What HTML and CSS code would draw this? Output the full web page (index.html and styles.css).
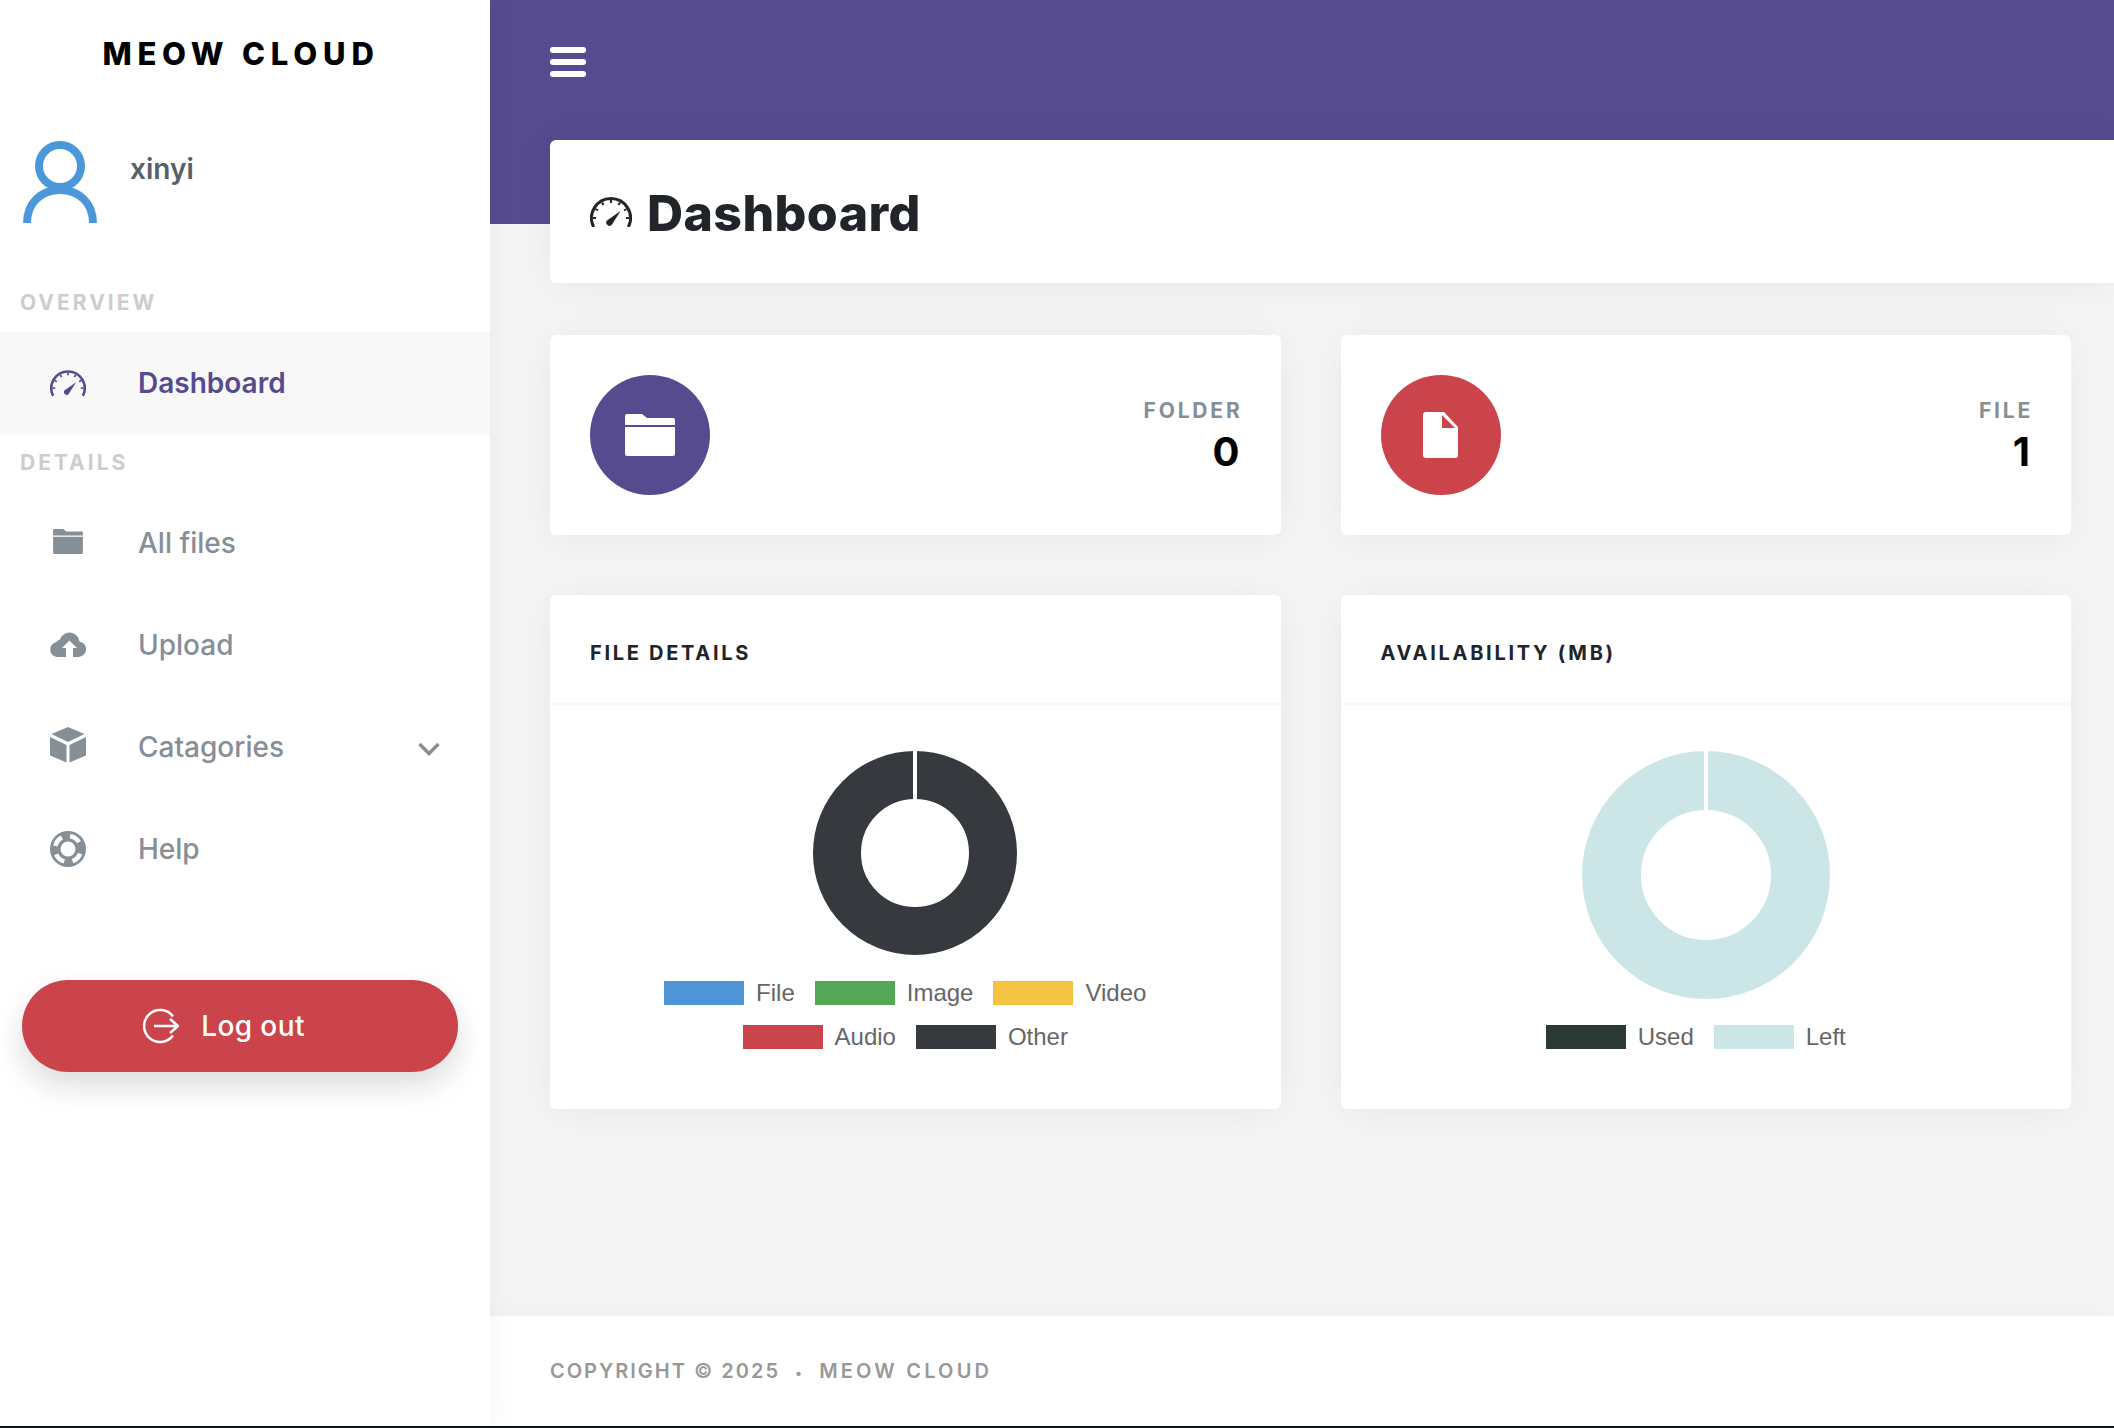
FILE: index.html
```html
<!DOCTYPE html>
<html lang="en">
  <head>
    <meta charset="UTF-8" />
    <title>Meow Cloud - Dashboard</title>
    <link rel="stylesheet" href="styles.css">
  </head>
  <body>
    <svg class="defs" width="0" height="0">
      <symbol id="gauge" viewBox="0 0 42 30">
        <path class="gauge-arc" d="M3.7 30A19.5 19.5 0 1 1 38.3 30" />
        <path class="gauge-ticks" d="M3 21h3M5.4 12l2.6 1.5M12 5.4l1.5 2.6M21 3v3M30 5.4L28.5 8M36.6 12L34 13.5M39 21h-3" />
        <path fill="currentColor" d="M30.5 14L22 27.5a3.2 3.2 0 0 1-5-4z" />
      </symbol>
      <symbol id="folder" viewBox="0 0 50 42">
        <path fill="currentColor" d="M2 0h15l5 4h26a2 2 0 0 1 2 2v5H0V2a2 2 0 0 1 2-2z" />
        <path fill="currentColor" d="M0 13h50v27a2 2 0 0 1-2 2H2a2 2 0 0 1-2-2z" />
      </symbol>
    </svg>

    <aside class="sidebar">
      <div class="brand">MEOW CLOUD</div>
      <div class="user">
        <svg class="user-icon" viewBox="0 0 74 83">
          <circle cx="37" cy="25" r="21" />
          <path d="M4 82C4 62 18 49 37 49s33 13 33 33" />
        </svg>
        <span class="user-name">xinyi</span>
      </div>

      <div class="menu-header first">OVERVIEW</div>
      <a class="menu-item active">
        <span class="menu-icon"><svg width="36" height="26"><use href="#gauge" /></svg></span>
        <span>Dashboard</span>
      </a>

      <div class="menu-header">DETAILS</div>
      <a class="menu-item">
        <span class="menu-icon raised"><svg width="30" height="25"><use href="#folder" /></svg></span>
        <span>All files</span>
      </a>
      <a class="menu-item">
        <span class="menu-icon raised">
          <svg width="36" height="27" viewBox="0 0 36 27">
            <path fill="currentColor" fill-rule="evenodd" d="M7.5 27A7.5 7.5 0 0 1 6.5 12.1 6.5 6.5 0 0 1 10 9.600 10 10 0 0 1 29.500 11.500 7.800 7.800 0 0 1 28.500 27zM19.500 10.500L12 18h4v9h7v-9h4z" />
          </svg>
        </span>
        <span>Upload</span>
      </a>
      <a class="menu-item">
        <span class="menu-icon raised">
          <svg width="36" height="36" viewBox="0 0 36 36">
            <path fill="currentColor" d="M18 0l16.500 7L18 15 1.500 7zM0 10l16.500 8v17.500L0 28.500zM36 10l-16.500 8v17.500L36 28.500z" />
          </svg>
        </span>
        <span>Catagories</span>
        <svg class="chevron" width="22" height="14" viewBox="0 0 22 14">
          <path d="M1.500 2L11 11.500 20.500 2" />
        </svg>
      </a>
      <a class="menu-item">
        <span class="menu-icon">
          <svg width="36" height="36" viewBox="0 0 36 36">
            <circle cx="18" cy="18" r="18" fill="currentColor" />
            <circle class="buoy-gaps" cx="18" cy="18" r="13" />
            <circle cx="18" cy="18" r="7.500" fill="#fff" />
          </svg>
        </span>
        <span>Help</span>
      </a>

      <a class="logout">
        <svg width="36" height="36" viewBox="0 0 36 36">
          <path d="M30 8.500A16 16 0 1 0 30 27.500M11 18h24M27 11l8 7-8 7" />
        </svg>
        <span>Log out</span>
      </a>
    </aside>

    <div class="main">
      <header class="topbar">
        <div class="hamburger"><i></i><i></i><i></i></div>
      </header>

      <div class="page-title">
        <svg width="42" height="30"><use href="#gauge" /></svg>
        <h1>Dashboard</h1>
      </div>

      <section class="content">
        <div class="card stat">
          <div class="stat-icon purple">
            <svg width="50" height="42"><use href="#folder" /></svg>
          </div>
          <div class="stat-text">
            <div class="stat-label">FOLDER</div>
            <div class="stat-value">0</div>
          </div>
        </div>
        <div class="card stat">
          <div class="stat-icon red">
            <svg width="35" height="46" viewBox="0 0 35 46">
              <path fill="#fff" d="M3 0h18l14 15v28a3 3 0 0 1-3 3H3a3 3 0 0 1-3-3V3a3 3 0 0 1 3-3z" />
              <path fill="#cc444b" d="M19 3v13h13z" />
            </svg>
          </div>
          <div class="stat-text">
            <div class="stat-label">FILE</div>
            <div class="stat-value">1</div>
          </div>
        </div>

        <div class="card chart-card">
          <h4 class="chart-title">FILE DETAILS</h4>
          <div class="chart-body">
            <svg class="donut" width="204" height="204" viewBox="0 0 204 204">
              <circle cx="102" cy="102" r="78" fill="none" stroke="#363a3e" stroke-width="48" />
              <rect x="100" y="0" width="4" height="48" fill="#fff" />
            </svg>
            <div class="legend">
              <span class="legend-item"><i class="swatch blue"></i>File</span>
              <span class="legend-item"><i class="swatch green"></i>Image</span>
              <span class="legend-item"><i class="swatch yellow"></i>Video</span>
            </div>
            <div class="legend">
              <span class="legend-item"><i class="swatch crimson"></i>Audio</span>
              <span class="legend-item"><i class="swatch dark"></i>Other</span>
            </div>
          </div>
        </div>
        <div class="card chart-card">
          <h4 class="chart-title">AVAILABILITY (MB)</h4>
          <div class="chart-body">
            <svg class="donut" width="248" height="248" viewBox="0 0 248 248">
              <circle cx="124" cy="124" r="94.500" fill="none" stroke="#cce6e7" stroke-width="59" />
              <rect x="122" y="0" width="4" height="59" fill="#fff" />
            </svg>
            <div class="legend">
              <span class="legend-item"><i class="swatch used"></i>Used</span>
              <span class="legend-item"><i class="swatch left"></i>Left</span>
            </div>
          </div>
        </div>
      </section>

      <footer class="footer">COPYRIGHT © 2025 <span class="dot">•</span> <span class="footer-name">MEOW CLOUD</span></footer>
    </div>
  </body>
</html>
```

FILE: styles.css
```css
* {
  box-sizing: border-box;
}
html,
body {
  margin: 0;
  height: 100%;
}
body {
  display: flex;
  height: 1428px;
  overflow: hidden;
  border-bottom: 2px solid #0d1216;
  background: #f5f5f5;
  font-family: Inter, "Liberation Sans", sans-serif;
}
.defs {
  position: absolute;
}

/* sidebar */
.sidebar {
  width: 490px;
  flex: none;
  background: #fff;
  box-shadow: 0 0 30px rgba(0, 0, 0, 0.05);
  position: relative;
  z-index: 1;
}
.brand {
  height: 106px;
  padding-right: 8px;
  line-height: 108px;
  text-align: center;
  font-size: 31px;
  font-weight: 800;
  letter-spacing: 5.8px;
  color: #000;
}
.user {
  display: flex;
  align-items: flex-start;
  padding: 35px 23px 0;
}
.user-icon {
  width: 74px;
  height: 83px;
  fill: none;
  stroke: #4a98d9;
  stroke-width: 8px;
}
.user-name {
  margin: 11px 0 0 33px;
  font-size: 28px;
  line-height: 34px;
  font-weight: 600;
  color: #56606a;
}
.menu-header {
  height: 58px;
  padding: 17px 0 0 20px;
  font-size: 21px;
  line-height: 24px;
  font-weight: 700;
  letter-spacing: 3px;
  color: #cdcdcd;
}
.menu-header.first {
  margin-top: 50px;
}
.menu-item {
  display: flex;
  align-items: center;
  height: 102px;
  padding-left: 50px;
  font-size: 28px;
  font-weight: 500;
  color: #868e96;
}
.menu-item.active {
  background: #f8f8f8;
  color: #574b90;
  font-weight: 600;
}
.menu-icon {
  width: 36px;
  margin-right: 52px;
  display: flex;
  justify-content: center;
}
.menu-icon.raised {
  margin-bottom: 4px;
}
.gauge-arc {
  fill: none;
  stroke: currentColor;
  stroke-width: 3px;
}
.gauge-ticks {
  fill: none;
  stroke: currentColor;
  stroke-width: 2px;
}
.buoy-gaps {
  fill: none;
  stroke: #fff;
  stroke-width: 4.5px;
  stroke-dasharray: 11 8.420;
  stroke-dashoffset: -4.700;
}
.chevron {
  margin: 4px 50px 0 auto;
  fill: none;
  stroke: #868e96;
  stroke-width: 3.500px;
}
.logout {
  display: flex;
  align-items: center;
  justify-content: center;
  gap: 22px;
  width: 436px;
  height: 92px;
  margin: 80px 0 0 22px;
  padding-right: 32px;
  border-radius: 46px;
  background: #cc444b;
  color: #fff;
  font-size: 28px;
  font-weight: 500;
  letter-spacing: 0.4px;
  box-shadow: 0 14px 30px rgba(0, 0, 0, 0.14);
}
.logout svg {
  fill: none;
  stroke: #fff;
  stroke-width: 2.500px;
}

/* main column */
.main {
  flex: 1;
  min-width: 0;
  display: flex;
  flex-direction: column;
}
.topbar {
  height: 224px;
  flex: none;
  padding: 47px 0 0 60px;
  background: #574b90;
}
.hamburger {
  display: flex;
  flex-direction: column;
  gap: 6px;
  width: 36px;
}
.hamburger i {
  height: 6px;
  border-radius: 3px;
  background: #fff;
}
.page-title {
  display: flex;
  align-items: center;
  gap: 15px;
  height: 143px;
  margin: -84px 0 0 60px;
  padding-left: 40px;
  border-radius: 6px 0 0 6px;
  background: #fff;
  color: #212529;
  box-shadow: 0 4px 40px rgba(0, 0, 0, 0.06);
  position: relative;
}
.page-title h1 {
  margin: 2px 0 0;
  font-size: 50px;
  font-weight: 800;
  letter-spacing: 0.4px;
  line-height: 56px;
}
.content {
  flex: 1;
  display: grid;
  grid-template-columns: 1fr 1fr;
  grid-auto-rows: min-content;
  gap: 60px;
  padding: 52px 43px 0 60px;
}
.card {
  border-radius: 6px;
  background: #fff;
  box-shadow: 0 4px 40px rgba(0, 0, 0, 0.06);
}
.stat {
  display: flex;
  align-items: center;
  justify-content: space-between;
  height: 200px;
  padding: 0 41px 0 40px;
}
.stat-icon {
  width: 120px;
  height: 120px;
  border-radius: 50%;
  display: flex;
  align-items: center;
  justify-content: center;
}
.stat-icon.purple {
  background: #574b90;
  color: #fff;
}
.stat-icon.red {
  background: #cc444b;
}
.stat-text {
  padding-top: 4px;
  text-align: right;
}
.stat-label {
  margin-right: -3px;
  font-size: 21px;
  line-height: 24px;
  font-weight: 700;
  letter-spacing: 2.8px;
  color: #868e96;
}
.stat-value {
  margin-top: 6px;
  font-size: 40px;
  line-height: 46px;
  font-weight: 700;
  color: #000;
}
.chart-card {
  height: 514px;
}
.chart-title {
  height: 110px;
  margin: 0;
  padding: 7px 40px 0;
  line-height: 102px;
  border-bottom: 2px solid #f9f9f9;
  font-size: 20px;
  font-weight: 700;
  letter-spacing: 2.7px;
  color: #212529;
}
.chart-body {
  display: flex;
  flex-direction: column;
  align-items: center;
  padding-top: 46px;
}
.donut {
  display: block;
  margin-bottom: 26px;
}
.legend {
  display: flex;
  justify-content: center;
  align-self: stretch;
  height: 24px;
  margin-bottom: 20px;
  font-family: "Liberation Sans", sans-serif;
  font-size: 24px;
  line-height: 24px;
  color: #666;
}
.legend-item {
  display: flex;
  align-items: center;
  margin-right: 20px;
}
.swatch {
  width: 80px;
  height: 24px;
  margin-right: 12px;
}
.swatch.blue {
  background: #4f94d6;
}
.swatch.green {
  background: #54a754;
}
.swatch.yellow {
  background: #f4c343;
}
.swatch.crimson {
  background: #cc444b;
}
.swatch.dark {
  background: #363a3e;
}
.swatch.used {
  background: #2b3a36;
}
.swatch.left {
  background: #cce6e7;
}
.footer {
  height: 110px;
  flex: none;
  padding-left: 60px;
  line-height: 110px;
  background: #fff;
  box-shadow: 0 0 30px rgba(0, 0, 0, 0.03);
  font-size: 20px;
  font-weight: 600;
  letter-spacing: 2px;
  color: #989898;
}
.dot {
  margin: 0 8px;
  font-size: 14px;
}
.footer-name {
  letter-spacing: 3.2px;
}
```
